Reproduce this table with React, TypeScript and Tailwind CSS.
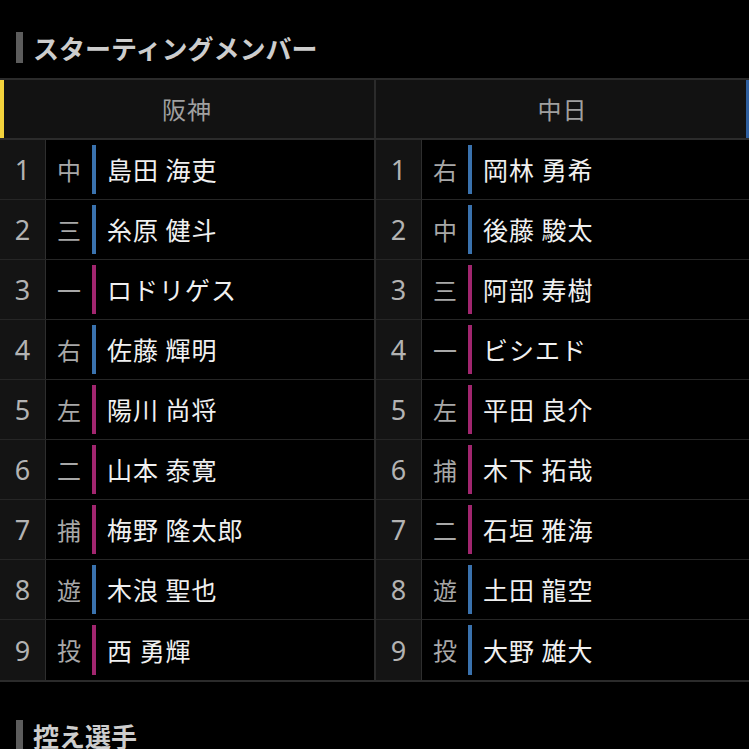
import React from "react";

type P = { n: number; pos: string; name: string; l: boolean };

const hanshin: P[] = [
  { n: 1, pos: "中", name: "島田 海吏", l: true },
  { n: 2, pos: "三", name: "糸原 健斗", l: true },
  { n: 3, pos: "一", name: "ロドリゲス", l: false },
  { n: 4, pos: "右", name: "佐藤 輝明", l: true },
  { n: 5, pos: "左", name: "陽川 尚将", l: false },
  { n: 6, pos: "二", name: "山本 泰寛", l: false },
  { n: 7, pos: "捕", name: "梅野 隆太郎", l: false },
  { n: 8, pos: "遊", name: "木浪 聖也", l: true },
  { n: 9, pos: "投", name: "西 勇輝", l: false },
];

const chunichi: P[] = [
  { n: 1, pos: "右", name: "岡林 勇希", l: true },
  { n: 2, pos: "中", name: "後藤 駿太", l: true },
  { n: 3, pos: "三", name: "阿部 寿樹", l: false },
  { n: 4, pos: "一", name: "ビシエド", l: false },
  { n: 5, pos: "左", name: "平田 良介", l: false },
  { n: 6, pos: "捕", name: "木下 拓哉", l: false },
  { n: 7, pos: "二", name: "石垣 雅海", l: false },
  { n: 8, pos: "遊", name: "土田 龍空", l: true },
  { n: 9, pos: "投", name: "大野 雄大", l: true },
];

const font = { fontFamily: '"Noto Sans CJK JP", "Noto Sans", sans-serif' };

function Team({ name, players, accent, side }: { name: string; players: P[]; accent: string; side: "l" | "r" }) {
  return (
    <div className={side === "l" ? "flex flex-col border-r-2 border-[#2b2b2b]" : "flex flex-col"}>
      <div className="relative h-[60px] bg-[#121212] border-b-2 border-[#2b2b2b] flex items-center justify-center">
        {side === "l" ? (
          <div className={`absolute left-0 top-0 bottom-0 w-[4px] ${accent}`} />
        ) : (
          <div className={`absolute right-0 top-0 bottom-0 w-[3px] ${accent}`} />
        )}
        <span className="text-[24px] leading-none text-[#a0a0a0] tracking-[1px]">{name}</span>
      </div>
      {players.map((p, i) => (
        <div
          key={p.n}
          className={`flex h-[60px] ${i < players.length - 1 ? "border-b border-[#262626]" : ""}`}
        >
          <div
            className="w-[46px] shrink-0 bg-[#141414] border-r border-[#2e2e2e] flex items-center justify-center text-[27px] leading-none text-[#b3b3b3]"
            style={{ fontFamily: '"Noto Sans", sans-serif' }}
          >
            {p.n}
          </div>
          <div className="w-[46px] shrink-0 flex items-center justify-center text-[24px] leading-none text-[#a8a8a8]">
            {p.pos}
          </div>
          <div className="flex items-center py-[5px]">
            <div className={`w-[4px] h-full ${p.l ? "bg-[#3a72ae]" : "bg-[#a1266f]"}`} />
          </div>
          <div className="flex items-center pl-[11px] text-[25px] tracking-[1px] leading-none text-[#f0f0f0] whitespace-nowrap">
            {p.name}
          </div>
        </div>
      ))}
    </div>
  );
}

export default function App() {
  return (
    <div className="w-[749px] h-[749px] bg-black overflow-hidden" style={font}>
      <div className="h-[78px] pt-[32px] pl-[16px] flex items-start">
        <div className="flex items-center gap-[10px]">
          <div className="w-[7px] h-[31px] bg-[#5c5c5c]" />
          <span className="text-[26px] leading-none font-bold text-[#cdcdcd]">スターティングメンバー</span>
        </div>
      </div>
      <div className="grid grid-cols-[376px_1fr] border-t-2 border-b-2 border-[#2b2b2b]">
        <Team name="阪神" players={hanshin} accent="bg-[#f2d23c]" side="l" />
        <Team name="中日" players={chunichi} accent="bg-[#2f5f9f]" side="r" />
      </div>
      <div className="pt-[38px] pl-[16px] flex items-center gap-[10px]">
        <div className="w-[7px] h-[31px] bg-[#5c5c5c]" />
        <span className="text-[26px] leading-none font-bold text-[#cdcdcd]">控え選手</span>
      </div>
    </div>
  );
}
